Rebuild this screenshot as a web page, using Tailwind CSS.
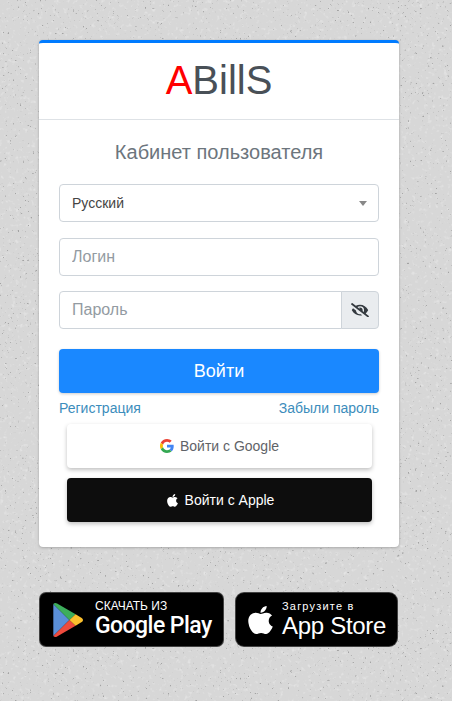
<!DOCTYPE html>
<html lang="en">
<head>
  <meta charset="UTF-8">
  <meta name="viewport" content="width=device-width, initial-scale=1.0">
  <title>ABillS</title>
  <script src="https://cdn.jsdelivr.net/npm/@tailwindcss/browser@4"></script>
</head>
<body class="relative h-[701px] overflow-hidden bg-[#d7d7d7] font-['Liberation_Sans',Arial,sans-serif]">
  <!-- grainy page background: dark specks, then light specks -->
  <svg class="absolute inset-0" width="452" height="701" aria-hidden="true">
    <filter id="dark" x="0" y="0" width="100%" height="100%" color-interpolation-filters="sRGB">
      <feTurbulence type="fractalNoise" baseFrequency="0.4" numOctaves="2" seed="7" />
      <feColorMatrix type="matrix" values="0 0 0 0 0.64  0 0 0 0 0.64  0 0 0 0 0.64  8 0 0 0 -5.6" />
    </filter>
    <filter id="light" x="0" y="0" width="100%" height="100%" color-interpolation-filters="sRGB">
      <feTurbulence type="fractalNoise" baseFrequency="0.25" numOctaves="2" seed="21" />
      <feColorMatrix type="matrix" values="0 0 0 0 0.9  0 0 0 0 0.9  0 0 0 0 0.9  0 3 0 0 -1.75" />
    </filter>
    <rect width="452" height="701" filter="url(#light)" />
    <rect width="452" height="701" filter="url(#dark)" />
  </svg>

  <div class="relative ml-[39px] w-[360px] pt-10">
    <div class="h-[507px] rounded-[4px] border-t-[3px] border-[#007bff] bg-white shadow-[0_0_1px_rgba(0,0,0,0.125),0_1px_3px_rgba(0,0,0,0.2)]">
      <div class="flex h-[77px] items-center justify-center border-b border-[#dee2e6] pb-[3px] text-[40px] leading-none text-[#495057]">
        <span class="text-[#ff0000]">A</span>BillS
      </div>

      <div class="px-5 pt-[20px]">
        <p class="text-center text-[20px] leading-[24px] text-[#6c757d]">Кабинет пользователя</p>

        <div class="mt-5 flex h-[38px] items-center justify-between rounded-[4px] border border-[#ced4da] pl-3 pr-[11px] text-[14px] text-[#444]">
          Русский
          <span class="h-0 w-0 border-x-[4px] border-t-[5px] border-x-transparent border-t-[#888]"></span>
        </div>

        <input type="text" placeholder="Логин" class="mt-4 block h-[38px] w-full rounded-[4px] border border-[#ced4da] px-3 text-[16px] placeholder:text-[#939ba2]">

        <div class="mt-[15px] flex h-[38px]">
          <input type="password" placeholder="Пароль" class="h-full min-w-0 flex-1 rounded-l-[4px] border border-[#ced4da] px-3 text-[16px] placeholder:text-[#939ba2]">
          <span class="-ml-px flex w-[38px] items-center justify-center rounded-r-[4px] border border-[#ced4da] bg-[#e9ecef]">
            <svg class="w-[18px] text-[#343a40]" viewBox="0 0 640 512" fill="currentColor"><path d="M320 400c-75.85 0-137.25-58.71-142.9-133.11L72.2 185.82c-13.79 17.3-26.48 35.59-36.72 55.59a32.35 32.35 0 0 0 0 29.19C89.71 376.41 197.07 448 320 448c26.91 0 52.87-4 77.89-10.46L346 397.39a144.13 144.13 0 0 1-26 2.61zm313.82 58.1l-110.55-85.44a331.25 331.25 0 0 0 81.25-102.07 32.35 32.35 0 0 0 0-29.19C550.29 135.59 442.93 64 320 64a308.15 308.15 0 0 0-147.32 37.7L45.46 3.37A16 16 0 0 0 23 6.18L3.37 31.45A16 16 0 0 0 6.18 53.9l588.36 454.73a16 16 0 0 0 22.46-2.81l19.64-25.27a16 16 0 0 0-2.82-22.45zm-183.72-142l-39.3-30.38A94.75 94.75 0 0 0 416 256a94.76 94.76 0 0 0-121.31-92.21A47.65 47.65 0 0 1 304 192a46.64 46.64 0 0 1-1.54 10l-73.61-56.89A142.31 142.31 0 0 1 320 112a143.92 143.92 0 0 1 144 144c0 21.63-5.29 41.79-13.9 60.11z"/></svg>
          </span>
        </div>

        <button class="mt-5 block h-[44px] w-full rounded-[4px] bg-[#1a88ff] text-[18px] text-white shadow-[0_1px_3px_rgba(0,0,0,0.2)]">Войти</button>

        <div class="mt-[7px] flex justify-between text-[14px] leading-[16px] text-[#3c8dbc]">
          <a href="#">Регистрация</a>
          <a href="#">Забыли пароль</a>
        </div>

        <div class="mx-2 mt-2 flex w-[305px] flex-col gap-[10px] text-[14px]">
          <a href="#" class="flex h-[44px] items-center justify-center gap-[6px] rounded-[4px] bg-white text-[#5f6368] shadow-[0_2px_4px_rgba(0,0,0,0.25)]">
            <svg class="w-[14px]" viewBox="0 0 48 48">
              <path fill="#EA4335" d="M24 9.5c3.54 0 6.71 1.22 9.21 3.6l6.85-6.85C35.9 2.38 30.47 0 24 0 14.62 0 6.51 5.38 2.56 13.22l7.98 6.19C12.43 13.72 17.74 9.5 24 9.5z"/>
              <path fill="#4285F4" d="M46.98 24.55c0-1.57-.15-3.09-.38-4.55H24v9.02h12.94c-.58 2.96-2.26 5.48-4.78 7.18l7.73 6c4.51-4.18 7.09-10.36 7.09-17.65z"/>
              <path fill="#FBBC05" d="M10.53 28.59c-.48-1.45-.76-2.99-.76-4.59s.27-3.14.76-4.59l-7.98-6.19C.92 16.46 0 20.12 0 24c0 3.88.92 7.54 2.56 10.78l7.97-6.19z"/>
              <path fill="#34A853" d="M24 48c6.48 0 11.93-2.13 15.89-5.81l-7.73-6c-2.15 1.45-4.92 2.3-8.16 2.3-6.26 0-11.57-4.22-13.47-9.91l-7.98 6.19C6.51 42.62 14.62 48 24 48z"/>
            </svg>
            Войти с Google
          </a>
          <a href="#" class="flex h-[44px] items-center justify-center gap-[7px] rounded-[4px] bg-[#0d0d0d] pl-[2px] text-white shadow-[0_2px_4px_rgba(0,0,0,0.25)]">
            <svg class="w-[11px]" viewBox="0 0 384 512" fill="currentColor"><path d="M318.7 268.7c-.2-36.7 16.4-64.4 50-84.8-18.8-26.9-47.2-41.7-84.7-44.6-35.5-2.8-74.3 20.7-88.5 20.7-15 0-49.4-19.7-76.4-19.7C63.3 141.2 4 184.8 4 273.5q0 39.3 14.4 81.2c12.8 36.7 59 126.7 107.2 125.2 25.2-.6 43-17.9 75.8-17.9 31.8 0 48.3 17.9 76.4 17.9 48.6-.7 90.4-82.5 102.6-119.3-65.2-30.7-61.7-90-61.7-91.9zm-56.6-164.2c27.3-32.4 24.8-61.9 24-72.5-24.1 1.4-52 16.4-67.9 34.9-17.5 19.8-27.8 44.3-25.6 71.9 26.1 2 49.9-11.4 69.5-34.3z"/></svg>
            Войти с Apple
          </a>
        </div>
      </div>
    </div>

    <!-- store badges -->
    <div class="mt-[45px] flex gap-[11px]">
      <a href="#" class="flex h-[55px] w-[185px] items-center rounded-[7px] border border-[#a6a6a6]/40 bg-black pl-[12px] text-white">
        <svg class="h-[36px] w-[32px] shrink-0" viewBox="0 0 33 38">
          <path fill="#5a8fd8" d="M1 2v34l17-17z"/>
          <path fill="#3dae5c" d="M1 2c1-1.2 2.4-1.4 4-.5L24.5 13 18 19z"/>
          <path fill="#ee4b3e" d="M1 36c1 1.2 2.4 1.4 4 .5L24.5 25 18 19z"/>
          <path fill="#fcc02d" d="M24.5 13l6.5 3.8c1.8 1.1 1.8 3.3 0 4.4L24.5 25 18 19z"/>
        </svg>
        <span class="ml-[11px] flex flex-col whitespace-nowrap">
          <span class="text-[12px] leading-[13px]">СКАЧАТЬ ИЗ</span>
          <span class="font-['Roboto',sans-serif] text-[23px] leading-[26px] font-medium tracking-[-0.55px]">Google Play</span>
        </span>
      </a>
      <a href="#" class="flex h-[55px] w-[163px] items-center rounded-[9px] border border-[#a6a6a6]/40 bg-black pl-[12px] text-white">
        <svg class="h-[32px] w-[25px] shrink-0" viewBox="0 0 384 512" preserveAspectRatio="none" fill="currentColor"><path d="M318.7 268.7c-.2-36.7 16.4-64.4 50-84.8-18.8-26.9-47.2-41.7-84.7-44.6-35.5-2.8-74.3 20.7-88.5 20.7-15 0-49.4-19.7-76.4-19.7C63.3 141.2 4 184.8 4 273.5q0 39.3 14.4 81.2c12.8 36.7 59 126.7 107.2 125.2 25.2-.6 43-17.9 75.8-17.9 31.8 0 48.3 17.9 76.4 17.9 48.6-.7 90.4-82.5 102.6-119.3-65.2-30.7-61.7-90-61.7-91.9zm-56.6-164.2c27.3-32.4 24.8-61.9 24-72.5-24.1 1.4-52 16.4-67.9 34.9-17.5 19.8-27.8 44.3-25.6 71.9 26.1 2 49.9-11.4 69.5-34.3z"/></svg>
        <span class="ml-[9px] flex flex-col whitespace-nowrap">
          <span class="text-[11px] leading-[13px] tracking-[1.2px]">Загрузите в</span>
          <span class="text-[24px] leading-[26px] tracking-[-0.3px]">App Store</span>
        </span>
      </a>
    </div>
  </div>
</body>
</html>
